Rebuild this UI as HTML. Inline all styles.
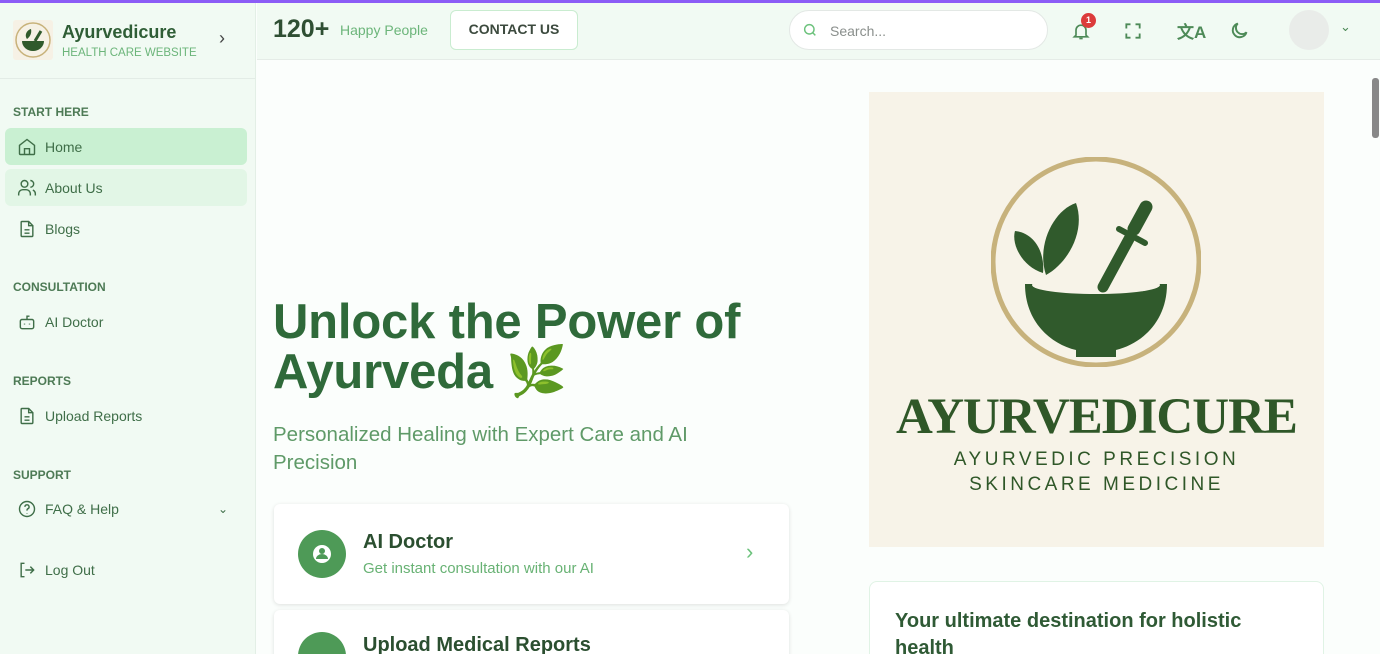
<!DOCTYPE html>
<html><head><meta charset="utf-8"><style>
*{box-sizing:border-box;margin:0;padding:0}
html,body{width:1380px;height:654px;overflow:hidden}
body{font-family:"Liberation Sans",sans-serif;background:#fbfefc;position:relative}
.topbar{position:absolute;left:0;top:0;width:1380px;height:3px;background:#8b5cf6}
.side{position:absolute;left:0;top:3px;width:256px;height:651px;background:#f1faf3;border-right:1px solid #e3efe6}
.brand{height:76px;border-bottom:1px solid #e3ece6;position:relative}
.logo{position:absolute;left:13px;top:17px;width:40px;height:40px;background:#f6f1e5;border-radius:3px}
.bt{position:absolute;left:62px;top:19px;font-size:18px;font-weight:bold;color:#2f5e36}
.bs{position:absolute;left:62px;top:44px;font-size:11.5px;color:#6cb57a}
.chev{position:absolute;left:219px;top:25px;color:#444;font-size:18px}
.sec{position:absolute;left:13px;font-size:12px;font-weight:bold;color:#4d7a55}
.item{position:absolute;left:5px;width:242px;height:37px;border-radius:6px;font-size:14px;color:#3f6e48;display:flex;align-items:center;padding-left:12px}
.item svg{width:20px;height:20px;margin-right:8px;stroke:#3f6e48;fill:none;stroke-width:1.7}
.hdr{position:absolute;left:257px;top:3px;width:1123px;height:57px;background:#f1faf3;border-bottom:1px solid #e5ece7}
.main h1{position:absolute;left:273px;top:297px;font-size:49px;line-height:50px;color:#2f6a3a;font-weight:bold;letter-spacing:-0.2px}
.sub{position:absolute;left:273px;top:421px;font-size:20.5px;line-height:28px;color:#5f9a68}
.card{position:absolute;left:274px;width:515px;background:#fff;border-radius:6px;box-shadow:0 1px 4px rgba(0,0,0,.12)}
.circ{position:absolute;left:24px;width:48px;height:48px;border-radius:50%;background:#4e9a57}
.ct{position:absolute;left:89px;font-size:20px;color:#2b4f30;font-weight:bold}
</style></head><body>
<div class="topbar"></div>
<div class="side">
 <div class="brand">
  <div class="logo"><svg width="40" height="40" viewBox="0 0 40 40"><circle cx="20" cy="20" r="17" fill="none" stroke="#c8b27a" stroke-width="1.5"/><path d="M9 21h22a11 10 0 0 1-22 0z" fill="#305a2c"/><path d="M14 19c-3-4 0-9 4-10 1 4-1 8-4 10z" fill="#305a2c"/><path d="M22 21l6-10" stroke="#305a2c" stroke-width="3"/></svg></div>
  <div class="bt">Ayurvedicure</div><div class="bs">HEALTH CARE WEBSITE</div><div class="chev">›</div>
 </div>
 <div class="sec" style="top:102px">START HERE</div>
 <div class="item" style="top:125px;background:#c9f0d2"><svg viewBox="0 0 24 24"><path d="M3 10l9-7 9 7v10a1 1 0 0 1-1 1H4a1 1 0 0 1-1-1z"/><path d="M9 21v-7h6v7"/></svg>Home</div>
 <div class="item" style="top:166px;background:#e2f6e6"><svg viewBox="0 0 24 24"><circle cx="9" cy="7" r="4"/><path d="M2 21v-2a5 5 0 0 1 5-5h4a5 5 0 0 1 5 5v2M16 3a4 4 0 0 1 0 8M22 21v-2a5 5 0 0 0-3-4.5"/></svg>About Us</div>
 <div class="item" style="top:207px"><svg viewBox="0 0 24 24"><path d="M14 3H6a1 1 0 0 0-1 1v16a1 1 0 0 0 1 1h12a1 1 0 0 0 1-1V8z"/><path d="M14 3v5h5M9 13h6M9 17h6"/></svg>Blogs</div>
 <div class="sec" style="top:277px">CONSULTATION</div>
 <div class="item" style="top:300px"><svg viewBox="0 0 24 24"><rect x="4" y="9" width="16" height="11" rx="2"/><path d="M12 9V5h3"/><path d="M9 14v1M15 14v1"/></svg>AI Doctor</div>
 <div class="sec" style="top:371px">REPORTS</div>
 <div class="item" style="top:394px"><svg viewBox="0 0 24 24"><path d="M14 3H6a1 1 0 0 0-1 1v16a1 1 0 0 0 1 1h12a1 1 0 0 0 1-1V8z"/><path d="M14 3v5h5M9 13h6M9 17h6"/></svg>Upload Reports</div>
 <div class="sec" style="top:465px">SUPPORT</div>
 <div class="item" style="top:487px"><svg viewBox="0 0 24 24"><circle cx="12" cy="12" r="9"/><path d="M9.5 9.5a2.5 2.5 0 1 1 3.5 2.3c-.7.3-1 .8-1 1.5V14M12 17v.5"/></svg>FAQ &amp; Help<span style="position:absolute;left:213px;font-size:12px">⌄</span></div>
 <div class="item" style="top:548px"><svg viewBox="0 0 24 24"><path d="M9 4H5v16h4M10 12h10M16 8l4 4-4 4"/></svg>Log Out</div>
</div>
<div class="hdr">
 <div style="position:absolute;left:16px;top:12px;font-size:25px;font-weight:bold;color:#2f4f33">120+</div>
 <div style="position:absolute;left:83px;top:19px;font-size:14px;color:#6cb57a">Happy People</div>
 <div style="position:absolute;left:193px;top:7px;width:128px;height:40px;border:1.5px solid #c9ecd0;border-radius:6px;background:#fff;font-size:14px;color:#3c4a3e;text-align:center;line-height:37px;font-weight:bold">CONTACT US</div>
 <div style="position:absolute;left:532px;top:7px;width:259px;height:40px;border:1px solid #e3e8e5;border-radius:20px;background:#fff"><svg style="position:absolute;left:12px;top:11px" width="16" height="16" viewBox="0 0 24 24" fill="none" stroke="#6cc27c" stroke-width="2.2"><circle cx="11" cy="11" r="7"/><path d="M16 16l4 4"/></svg><span style="position:absolute;left:40px;top:12px;font-size:14px;color:#8a8f8c">Search...</span></div>
 <svg style="position:absolute;left:814px;top:17px" width="20" height="22" viewBox="0 0 24 24" fill="none" stroke="#4d8a57" stroke-width="2"><path d="M6 17V11a6 6 0 0 1 12 0v6l2 2H4z"/><path d="M10 21h4"/></svg>
 <div style="position:absolute;left:824px;top:10px;width:15px;height:15px;border-radius:50%;background:#dc3b3b;color:#fff;font-size:9px;text-align:center;line-height:15px;font-weight:bold">1</div>
 <svg style="position:absolute;left:866px;top:18px" width="20" height="20" viewBox="0 0 24 24" fill="none" stroke="#4d8a57" stroke-width="2.2"><path d="M4 9V4h5M15 4h5v5M20 15v5h-5M9 20H4v-5"/></svg>
 <div style="position:absolute;left:920px;top:15px;font-size:17px;color:#4d8a57;font-weight:bold">文A</div>
 <svg style="position:absolute;left:972px;top:17px" width="21" height="21" viewBox="0 0 24 24" fill="none" stroke="#4d8a57" stroke-width="2.2"><path d="M20 14A8 8 0 1 1 10 4a6 6 0 0 0 10 10z"/></svg>
 <div style="position:absolute;left:1032px;top:7px;width:40px;height:40px;border-radius:50%;background:#e9ece9"></div>
 <div style="position:absolute;left:1083px;top:16px;font-size:13px;color:#4d8a57">⌄</div>
</div>
<div class="main">
 <h1>Unlock the Power of<br>Ayurveda 🌿</h1>
 <div class="sub">Personalized Healing with Expert Care and AI<br>Precision</div>
 <div class="card" style="top:504px;height:100px">
  <div class="circ" style="top:26px"><svg width="48" height="48" viewBox="0 0 48 48"><circle cx="24" cy="24" r="9" fill="#fff"/><circle cx="24" cy="21" r="3" fill="#4e9a57"/><path d="M18 29a6 5 0 0 1 12 0" fill="#4e9a57"/></svg></div>
  <div class="ct" style="top:27px">AI Doctor</div>
  <div style="position:absolute;left:89px;top:56px;font-size:15px;color:#68b274">Get instant consultation with our AI</div>
  <div style="position:absolute;left:472px;top:35px;font-size:22px;color:#6cc27c">›</div>
 </div>
 <div class="card" style="top:610px;height:60px">
  <div class="circ" style="top:22px"></div>
  <div class="ct" style="top:24px">Upload Medical Reports</div>
 </div>
 <div style="position:absolute;left:869px;top:92px;width:455px;height:455px;background:#f7f3e8">
  <svg style="position:absolute;left:122px;top:65px" width="210" height="210" viewBox="0 0 210 210"><circle cx="105" cy="105" r="103" fill="none" stroke="#c7b27c" stroke-width="5"/><path d="M34 127h142c0 38-26 60-51 66v7h-40v-7c-25-6-51-28-51-66z" fill="#305a2c"/><ellipse cx="105" cy="128" rx="64" ry="9" fill="#f7f3e8"/><path d="M55 118c-10-30 8-65 30-72 10 28-8 60-30 72z" fill="#305a2c"/><path d="M52 116c-20-6-32-28-28-42 20 2 30 22 28 42z" fill="#305a2c"/><path d="M112 130l26-48" stroke="#305a2c" stroke-width="11" stroke-linecap="round"/><path d="M143 72l12-22" stroke="#305a2c" stroke-width="13" stroke-linecap="round"/><path d="M128 72l26 14" stroke="#305a2c" stroke-width="6" stroke-linecap="round"/></svg>
  <div style="position:absolute;left:0;width:455px;top:296px;text-align:center;font-family:'Liberation Serif',serif;font-size:51px;color:#2f5728;font-weight:bold;letter-spacing:-1px">AYURVEDICURE</div>
  <div style="position:absolute;left:0;width:455px;top:355px;text-align:center;font-size:19px;color:#2f5728;letter-spacing:3.5px;line-height:25px">AYURVEDIC PRECISION<br>SKINCARE MEDICINE</div>
 </div>
 <div style="position:absolute;left:869px;top:581px;width:455px;height:100px;background:#fff;border:1px solid #e0f3e5;border-radius:8px">
  <div style="position:absolute;left:25px;top:26px;font-size:20px;line-height:27px;color:#2f5a35;font-weight:bold">Your ultimate destination for holistic<br>health</div>
 </div>
 <div style="position:absolute;left:1372px;top:78px;width:7px;height:60px;background:#888;border-radius:3px"></div>
</div>
</body></html>
